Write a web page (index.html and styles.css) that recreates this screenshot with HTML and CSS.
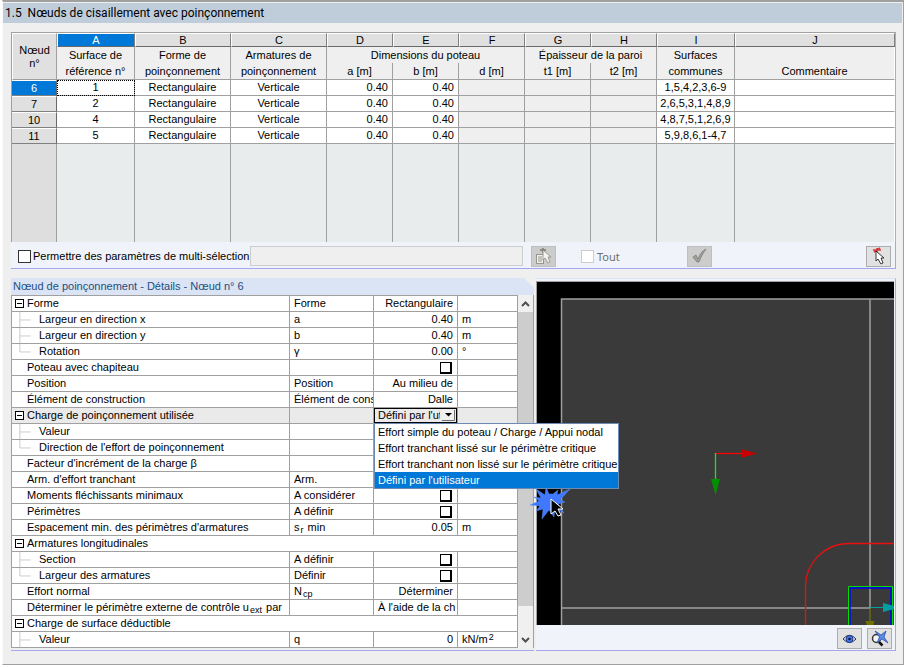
FILE: index.html
```html
<!DOCTYPE html>
<html lang="fr">
<head>
    <meta charset="UTF-8">
    <meta name="viewport" content="width=device-width, initial-scale=1.0">
    <title>1.5 Nœuds de cisaillement avec poinçonnement</title>
    <link rel="stylesheet" href="styles.css">
</head>
<body>
    <!-- tree branches shared by the details rows -->
    <svg class="defs" width="0" height="0">
        <symbol id="mid" viewBox="0 0 27 16"><path d="M7.5 0V16M7.5 8.5H19" fill="none" stroke="#c8c8c8"/></symbol>
        <symbol id="end" viewBox="0 0 27 16"><path d="M7.5 0V8.5H19" fill="none" stroke="#c8c8c8"/></symbol>
    </svg>

    <div class="window">
        <h1>1.5&nbsp; Nœuds de cisaillement avec poinçonnement</h1>

        <section class="nodes">
            <table class="grid">
                <colgroup>
                    <col class="c-node"><col class="c-code"><col class="c-text"><col class="c-text">
                    <col class="c-num"><col class="c-num"><col class="c-num"><col class="c-num"><col class="c-num">
                    <col class="c-code"><col>
                </colgroup>
                <thead>
                    <tr class="letters">
                        <th rowspan="3" class="corner">Nœud<br>n°</th>
                        <th class="active">A</th>
                        <th>B</th>
                        <th>C</th>
                        <th>D</th>
                        <th>E</th>
                        <th>F</th>
                        <th>G</th>
                        <th>H</th>
                        <th>I</th>
                        <th>J</th>
                    </tr>
                    <tr class="names">
                        <th>Surface de</th>
                        <th>Forme de</th>
                        <th>Armatures de</th>
                        <th colspan="3">Dimensions du poteau</th>
                        <th colspan="2">Épaisseur de la paroi</th>
                        <th>Surfaces</th>
                        <th></th>
                    </tr>
                    <tr class="names last">
                        <th>référence n°</th>
                        <th>poinçonnement</th>
                        <th>poinçonnement</th>
                        <th>a [m]</th>
                        <th>b [m]</th>
                        <th>d [m]</th>
                        <th>t1 [m]</th>
                        <th>t2 [m]</th>
                        <th>communes</th>
                        <th>Commentaire</th>
                    </tr>
                </thead>
                <tbody>
                    <tr>
                        <th class="active">6</th>
                        <td class="focus">1</td><td>Rectangulaire</td><td>Verticale</td>
                        <td class="num">0.40</td><td class="num">0.40</td>
                        <td class="off"></td><td class="off"></td><td class="off"></td>
                        <td>1,5,4,2,3,6-9</td><td></td>
                    </tr>
                    <tr>
                        <th>7</th>
                        <td>2</td><td>Rectangulaire</td><td>Verticale</td>
                        <td class="num">0.40</td><td class="num">0.40</td>
                        <td class="off"></td><td class="off"></td><td class="off"></td>
                        <td>2,6,5,3,1,4,8,9</td><td></td>
                    </tr>
                    <tr>
                        <th>10</th>
                        <td>4</td><td>Rectangulaire</td><td>Verticale</td>
                        <td class="num">0.40</td><td class="num">0.40</td>
                        <td class="off"></td><td class="off"></td><td class="off"></td>
                        <td>4,8,7,5,1,2,6,9</td><td></td>
                    </tr>
                    <tr>
                        <th>11</th>
                        <td>5</td><td>Rectangulaire</td><td>Verticale</td>
                        <td class="num">0.40</td><td class="num">0.40</td>
                        <td class="off"></td><td class="off"></td><td class="off"></td>
                        <td>5,9,8,6,1-4,7</td><td></td>
                    </tr>
                    <tr class="empty">
                        <td></td><td></td><td></td><td></td><td></td><td></td><td></td><td></td><td></td><td></td><td></td>
                    </tr>
                </tbody>
            </table>
            <div class="multi">
                <input type="checkbox" id="multi" class="check">
                <label for="multi" class="multi-label">Permettre des paramètres de multi-sélection</label>
                <input type="text" class="multi-field" aria-label="Nœuds sélectionnés" disabled>
                <button class="tool off" aria-label="Sélectionner dans la liste" disabled>
                    <svg width="19" height="18" viewBox="0 0 19 18">
                        <path d="M6 3h6M9 1v5" stroke="#8c8c84" stroke-width="2"/>
                        <rect x="2.500" y="7.500" width="7" height="9" fill="#f0f0e8" stroke="#96968e"/>
                        <path d="M4 10h4M4 12h4M4 14h4" stroke="#96968e"/>
                        <path d="M9 3v10l2-2 3 5 2-1-2-5h3z" fill="#f4f4ee" stroke="#8c8c84" stroke-width=".8"/>
                    </svg>
                </button>
                <input type="checkbox" id="all" class="check pale" disabled>
                <label for="all" class="all-label">Tout</label>
                <button class="tool off" aria-label="Appliquer" disabled>
                    <svg width="19" height="18" viewBox="0 0 19 18">
                        <path d="M3 10l3-2 2 4c2-5 4-8 8-10-3 4-5 8-7 13H7z" fill="#a0a09a" stroke="#777771" stroke-width=".7"/>
                    </svg>
                </button>
                <button class="tool pick" aria-label="Choisir dans le graphique">
                    <svg width="19" height="18" viewBox="0 0 19 18">
                        <path d="M4 3h8M8 1v5M5 5l6-4" stroke="#d83a3a" stroke-width="1.600"/>
                        <path d="M7 4v10l2-2 3 5 2-1-2-5h3z" fill="#fff" stroke="#222" stroke-width=".9"/>
                    </svg>
                </button>
            </div>
        </section>

        <div class="lower">
            <section class="details">
                <h2>Nœud de poinçonnement - Détails - Nœud n° 6</h2>
                <div class="scroller">
                    <div class="props-wrap">
                        <table class="props">
                            <colgroup><col class="p-name"><col class="p-sym"><col class="p-sym"><col></colgroup>
                            <tbody>
                                <tr><td><button class="toggle" aria-label="Réduire"></button>Forme</td><td>Forme</td><td>Rectangulaire</td><td></td></tr>
                                <tr><td><svg class="branch"><use href="#mid"/></svg>Largeur en direction x</td><td>a</td><td>0.40</td><td>m</td></tr>
                                <tr><td><svg class="branch"><use href="#mid"/></svg>Largeur en direction y</td><td>b</td><td>0.40</td><td>m</td></tr>
                                <tr><td><svg class="branch"><use href="#end"/></svg>Rotation</td><td>γ</td><td>0.00</td><td>°</td></tr>
                                <tr><td class="plain"><label for="head">Poteau avec chapiteau</label></td><td></td><td><input type="checkbox" id="head" class="box"></td><td></td></tr>
                                <tr><td class="plain">Position</td><td>Position</td><td>Au milieu de</td><td></td></tr>
                                <tr><td class="plain">Élément de construction</td><td>Élément de cons</td><td>Dalle</td><td></td></tr>
                                <tr class="current">
                                    <td><button class="toggle" aria-label="Réduire"></button><label for="load">Charge de poinçonnement utilisée</label></td>
                                    <td></td>
                                    <td class="combo">
                                        <select id="load">
                                            <option>Défini par l'utilisateur</option>
                                        </select>
                                        <svg class="arrow" width="13" height="11" viewBox="0 0 13 11">
                                            <path d="M0 0h13v11H0z" fill="#efefef"/>
                                            <path d="M12.500 0v10.500H0" fill="none" stroke="#707070"/>
                                            <path d="M3 3h7L6.500 6.500z"/>
                                        </svg>
                                        <ul class="menu" role="listbox">
                                            <li role="option">Effort simple du poteau / Charge / Appui nodal</li>
                                            <li role="option">Effort tranchant lissé sur le périmètre critique</li>
                                            <li role="option">Effort tranchant non lissé sur le périmètre critique</li>
                                            <li role="option" class="selected" aria-selected="true">Défini par l'utilisateur</li>
                                        </ul>
                                    </td>
                                    <td></td>
                                </tr>
                                <tr><td><svg class="branch"><use href="#mid"/></svg>Valeur</td><td></td><td></td><td></td></tr>
                                <tr><td><svg class="branch"><use href="#end"/></svg>Direction de l'effort de poinçonnement</td><td></td><td></td><td></td></tr>
                                <tr><td class="plain">Facteur d'incrément de la charge β</td><td></td><td></td><td></td></tr>
                                <tr><td class="plain">Arm. d'effort tranchant</td><td>Arm.</td><td></td><td></td></tr>
                                <tr><td class="plain"><label for="moments">Moments fléchissants minimaux</label></td><td>A considérer</td><td><input type="checkbox" id="moments" class="box"></td><td></td></tr>
                                <tr><td class="plain"><label for="perim">Périmètres</label></td><td>A définir</td><td><input type="checkbox" id="perim" class="box"></td><td></td></tr>
                                <tr><td class="plain">Espacement min. des périmètres d'armatures</td><td>s<sub>r</sub> min</td><td>0.05</td><td>m</td></tr>
                                <tr><td colspan="4"><button class="toggle" aria-label="Réduire"></button>Armatures longitudinales</td></tr>
                                <tr><td><svg class="branch"><use href="#mid"/></svg><label for="section">Section</label></td><td>A définir</td><td><input type="checkbox" id="section" class="box"></td><td></td></tr>
                                <tr><td><svg class="branch"><use href="#end"/></svg><label for="width">Largeur des armatures</label></td><td>Définir</td><td><input type="checkbox" id="width" class="box"></td><td></td></tr>
                                <tr><td class="plain">Effort normal</td><td>N<sub>cp</sub></td><td>Déterminer</td><td></td></tr>
                                <tr><td class="plain">Déterminer le périmètre externe de contrôle u<sub>ext</sub> par</td><td></td><td>À l'aide de la ch</td><td></td></tr>
                                <tr><td colspan="4"><button class="toggle" aria-label="Réduire"></button>Charge de surface déductible</td></tr>
                                <tr><td><svg class="branch"><use href="#mid"/></svg>Valeur</td><td>q</td><td>0</td><td>kN/m<sup>2</sup></td></tr>
                            </tbody>
                        </table>
                    </div>
                    <div class="scrollbar">
                        <button aria-label="Monter"><svg width="9" height="6" viewBox="0 0 9 6"><path d="M1 5l3.500-3.500L8 5" fill="none" stroke="#505050" stroke-width="2"/></svg></button>
                        <div class="thumb"></div>
                        <div class="track"></div>
                        <button aria-label="Descendre"><svg width="9" height="6" viewBox="0 0 9 6"><path d="M1 1l3.500 3.500L8 1" fill="none" stroke="#505050" stroke-width="2"/></svg></button>
                    </div>
                </div>
            </section>

            <section class="view">
                <svg class="scene">
                    <rect width="100%" height="100%" fill="#000"/>
                    <rect x="24" y="17" width="100%" height="100%" fill="#3a3a3a"/>
                    <g fill="none" stroke="#a0a0a0" stroke-width="1.500">
                        <path d="M24.500 400V17H2000"/>
                        <path d="M333 17V326H24"/>
                    </g>
                    <path d="M268.500 400V304.500A43 43 0 0 1 311.500 261.500H2000" fill="none" stroke="#e81010" stroke-width="1.300"/>
                    <path d="M311.500 400V304.500H355.500V400" fill="none" stroke="#00e000"/>
                    <path d="M313 400V306H354V400" fill="none" stroke="#0000f0" stroke-width="1.500"/>
                    <path d="M178.500 171.500H204" stroke="#ff0000" stroke-width="1.300"/>
                    <path d="M204 167l16 4.500-16 4.500z" fill="#c80000"/>
                    <path d="M178.500 171V197" stroke="#20e020" stroke-width="1.300"/>
                    <path d="M174 197h9l-4.500 16z" fill="#009000"/>
                    <path d="M333 325.500H346" stroke="#00a0a0"/>
                    <path d="M346 321l16 4.500-16 4.500z" fill="#00a0a0"/>
                    <path d="M333 326V339" stroke="#808000"/>
                    <path d="M328.500 339h9l-4.500 15z" fill="#707000"/>
                </svg>
                <div class="view-tools">
                    <button class="tool" aria-label="Afficher">
                        <svg width="15" height="12" viewBox="0 0 15 12">
                            <path d="M1 6Q7.500-1.500 14 6 7.500 13 1 6z" fill="#e8eefc" stroke="#333"/>
                            <circle cx="7.500" cy="6" r="3.500" fill="#4a78e0" stroke="#1c3890"/>
                            <circle cx="7.500" cy="6" r="1.300" fill="#0a1440"/>
                        </svg>
                    </button>
                    <button class="tool" aria-label="Zoom">
                        <svg width="19" height="17" viewBox="0 0 19 17">
                            <circle cx="6.500" cy="8.500" r="4" fill="#f4f4f4" stroke="#333" stroke-width="1.500"/>
                            <path d="M9 12l3.500 3.500" stroke="#111" stroke-width="2.500"/>
                            <path d="M5 1l6 4 5-4-2 6 4 6-6-4-5 4 2.500-6z" fill="#5a8ae8" stroke="#2b4fa8" stroke-width=".8"/>
                        </svg>
                    </button>
                </div>
                <svg class="click" width="42" height="40" viewBox="0 0 42 40">
                    <path d="M19 9L16 2l-1 8-9-6 5 9-7-1 5 4-9 4 10 1-4 5 7-2-1 10 7-9 5 7 1-9 9 5-6-9 7-2-5-2 10-11-13 6 1-5-5 4z" fill="#4078ff" stroke="#5a9aff" stroke-width=".4"/>
                    <path d="M21 14v15l4-3 3 5 3-1-3-6h5z" fill="#000" stroke="#fff"/>
                </svg>
            </section>
        </div>
    </div>
</body>
</html>
```

FILE: styles.css
```css
* {
    box-sizing: border-box;
}
body {
    margin: 0;
    background: #fff;
    font: 11px/15px "Liberation Sans", Arial, sans-serif;
    color: #000;
}
button, input, select {
    font: inherit;
    margin: 0;
}
.defs {
    display: block;
}
.window {
    margin: 0 2px;
    padding-bottom: 13px;
    background: #efefef;
    border: 1px solid #a0a0a0;
    border-top-width: 2px;
    border-left-color: #f8f8f8;
}
h1 {
    margin: 1px 1px 9px 0;
    padding-left: 2px;
    background: #bfcddb;
    font: 12px/20px Roboto, sans-serif;
}

/* upper grid */
.nodes {
    margin: 0 7px 9px 8px;
    border-right: 1px solid #a6a6f0;
    border-bottom: 1px solid #a6a6f0;
}
.grid {
    width: 100%;
    table-layout: fixed;
    border-collapse: separate;
    border-spacing: 0;
    border-top: 1px solid #a0a0a0;
    border-left: 1px solid #a0a0a0;
}
.c-node {
    width: 45px;
}
.c-code {
    width: 78px;
}
.c-text {
    width: 96px;
}
.c-num {
    width: 66px;
}
.grid th, .grid td {
    padding: 0;
    height: 16px;
    font-weight: normal;
    text-align: center;
    white-space: nowrap;
    border-right: 1px solid #a0a0a0;
    border-bottom: 1px solid #a0a0a0;
}
.grid tr > :last-child {
    border-right-color: #fff;
}
.grid td {
    background: #fff;
}
.grid .letters th {
    height: 14px;
    line-height: 12px;
    background: #e0e0e0;
    border-top: 1px solid #fff;
    border-left: 1px solid #fff;
    border-right-color: #808080;
    border-bottom-color: #696969;
}
.grid .letters .corner {
    line-height: 13px;
    border-right-color: #a0a0a0;
    border-bottom-color: #a0a0a0;
}
.grid .names th {
    line-height: 14px;
    border-bottom: 0;
}
.grid .names.last th {
    height: 17px;
    border-bottom: 1px solid #a0a0a0;
}
.grid tbody th {
    background: #e0e0e0;
    line-height: 13px;
    border-top: 1px solid #fff;
    border-right-color: #696969;
    border-bottom-color: #808080;
}
.grid tbody .active, .grid .letters .active {
    background: #0078d7;
    color: #fff;
}
.grid .focus {
    outline: 1px dotted #000;
    outline-offset: -1px;
}
.grid .num {
    padding-right: 4px;
    text-align: right;
}
.grid .off {
    background: #efefef;
}
.grid .empty td {
    height: 98px;
    background: #e8ecec;
    border-bottom: 0;
}
.grid .empty td:first-child {
    background: #dedede;
}

/* multi-selection bar */
.multi {
    display: flex;
    align-items: center;
    height: 26px;
    padding: 2px 4px 0 7px;
    background: #f0f4fa;
}
.check {
    appearance: none;
    flex: none;
    width: 13px;
    height: 13px;
    background: #fff;
    border: 1px solid #333;
}
.check.pale {
    margin-left: 25px;
    border-color: #ccc;
}
.multi-label {
    width: 216px;
    margin-left: 2px;
    white-space: nowrap;
}
.multi-field {
    width: 273px;
    height: 20px;
    margin: 0 8px 0 1px;
    background: #efefef;
    border: 1px solid #ccc;
}
.all-label {
    width: 90px;
    margin-left: 3px;
    color: #6d6d6d;
    font-family: "Noto Sans", sans-serif;
}
.tool {
    display: flex;
    align-items: center;
    justify-content: center;
    flex: none;
    width: 25px;
    height: 21px;
    padding: 0;
    background: #e1e1e1;
    border: 1px solid #adadad;
}
.tool.off {
    background: #ccc;
    border-color: #bfbfbf;
}
.pick {
    margin-left: auto;
}

/* details */
.lower {
    display: flex;
    gap: 2px;
    margin: 0 7px 0 8px;
}
.details {
    flex: none;
    width: 523px;
    border-bottom: 1px solid #a6a6f0;
    padding-bottom: 2px;
}
h2 {
    margin: 0;
    padding-left: 2px;
    background: #dae4f4;
    clip-path: polygon(0 0, 513px 0, 100% 10px, 100% 100%, 0 100%);
    color: #1f4e80;
    font-size: 11px;
    font-weight: normal;
    line-height: 17px;
}
.scroller {
    display: flex;
}
.props-wrap {
    flex: 1;
    min-width: 0;
}
.props {
    width: 100%;
    table-layout: fixed;
    border-collapse: separate;
    border-spacing: 0;
    border-top: 1px solid #a0a0a0;
    border-left: 1px solid #a0a0a0;
    background: #fff;
}
.p-name {
    width: 278px;
}
.p-sym {
    width: 84px;
}
.props td {
    height: 16px;
    padding: 0 4px;
    line-height: 15px;
    white-space: nowrap;
    border-right: 1px solid #a0a0a0;
    border-bottom: 1px solid #a0a0a0;
}
.props td:first-child {
    padding: 0;
}
.props td.plain {
    padding-left: 15px;
}
.props td:nth-child(2) {
    overflow: hidden;
}
.props td:nth-child(3) {
    text-align: right;
}
.props .current td {
    background: #eaeaea;
}
.branch {
    display: inline-block;
    width: 27px;
    height: 15px;
    vertical-align: top;
}
.toggle {
    width: 9px;
    height: 9px;
    margin: 3px;
    padding: 0;
    vertical-align: top;
    border: 1px solid #000;
    background: linear-gradient(#000, #000) center / 5px 1px no-repeat #fff;
}
.box {
    appearance: none;
    display: block;
    width: 12px;
    height: 12px;
    margin: 1px 1px 0 auto;
    border: 1px solid #000;
    border-right-width: 2px;
    border-bottom-width: 2px;
}
sub, sup {
    font-size: 9px;
    line-height: 1px;
    margin: 0 1px;
}
sub {
    vertical-align: -2px;
}
sup {
    vertical-align: 3px;
}
.props .current .combo {
    position: relative;
    padding: 0;
}
.combo select {
    appearance: none;
    display: block;
    width: 100%;
    height: 15px;
    padding: 0 16px 0 3px;
    border: 1px solid #000;
    border-radius: 0;
    background: #eaeaea;
    color: #000;
    line-height: 13px;
}
.arrow {
    position: absolute;
    top: 2px;
    right: 2px;
    pointer-events: none;
}
.menu {
    position: absolute;
    top: 15px;
    left: 0;
    z-index: 2;
    margin: 0;
    padding: 0;
    min-width: 236px;
    list-style: none;
    text-align: left;
    background: #fff;
    border: 1px solid #6a8cb4;
}
.menu li {
    height: 16px;
    padding: 0 1px 0 3px;
    line-height: 16px;
}
.menu .selected {
    background: #0078d7;
    color: #fff;
}
.scrollbar {
    display: flex;
    flex-direction: column;
    width: 16px;
    background: #f0f0f0;
    border-right: 1px solid #a0a0a0;
}
.scrollbar button {
    height: 17px;
    padding: 0;
    border: 0;
    background: #f0f0f0;
}
.thumb {
    flex: 12;
    background: #cdcdcd;
}
.track {
    flex: 1;
}

/* graphics */
.view {
    position: relative;
    flex: 1;
    min-width: 0;
    display: flex;
    flex-direction: column;
    border-right: 1px solid #a6a6f0;
    border-bottom: 1px solid #a6a6f0;
    border-top: 1px solid #dae4f4;
    background: #f0f4fa;
    padding-top: 2px;
}
.scene {
    flex: 1;
    width: calc(100% - 1px);
    min-height: 0;
    border-top: 1px solid #a0a0a0;
    border-left: 1px solid #a0a0a0;
}
.view-tools {
    display: flex;
    justify-content: flex-end;
    gap: 5px;
    padding: 3px 3px 1px;
}
.click {
    position: absolute;
    left: -6px;
    top: 206px;
}
```
